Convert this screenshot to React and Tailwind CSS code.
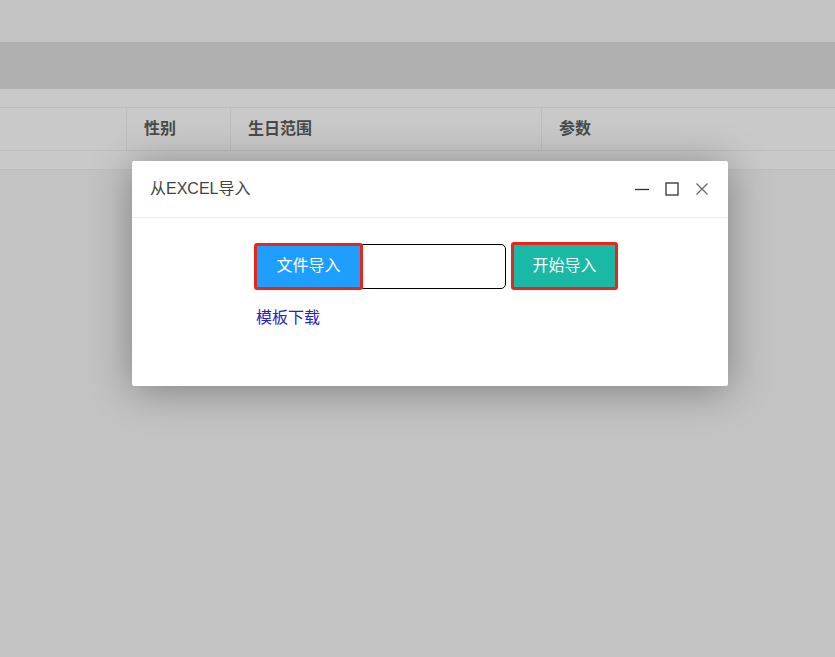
import React from 'react';

const font = { fontFamily: '"Liberation Sans", "Noto Sans CJK SC", sans-serif' };

const HeaderCell = ({ width, children, last }) => (
    <div className={`h-full flex items-center pl-[17px] ${last ? 'flex-1' : 'border-r border-[#bdbdbd]'} ${width}`}>
        <span className="text-[16px] font-bold text-[#4a4a4a]">{children}</span>
    </div>
);

const ImportDialog = () => (
    <div className="absolute left-[132px] top-[161px] w-[596px] h-[225px] bg-white rounded-[2px] shadow-[0_4px_40px_rgba(0,0,0,0.35)]">
        <div className="h-[57px] border-b border-[#eeeeee] flex items-center pl-[18px] pr-[19px]">
            <span className="text-[16px] text-[#444] flex-1">从EXCEL导入</span>
            <div className="flex items-center gap-[16px]">
                <svg width="14" height="14" viewBox="0 0 14 14"><path d="M0 7.5h14" stroke="#333" strokeWidth="1.3" /></svg>
                <svg width="14" height="14" viewBox="0 0 14 14"><rect x="1" y="1" width="12" height="12" fill="none" stroke="#333" strokeWidth="1.3" /></svg>
                <svg width="14" height="14" viewBox="0 0 14 14"><path d="M1.5 1.5l11 11M12.5 1.5l-11 11" stroke="#666" strokeWidth="1.2" /></svg>
            </div>
        </div>

        <div className="pl-[122px] pt-[24px]">
            <div className="flex items-center">
                <button className="w-[109px] h-[47px] border-[3px] border-[#e8261c] rounded-[3px] bg-[#1e9fff] text-white text-[16px] relative z-10">
                    文件导入
                </button>
                <div className="w-[144px] h-[45px] -ml-[1px] border border-black rounded-r-[5px] bg-white"></div>
                <button className="ml-[5px] w-[107px] h-[48px] border-[3px] border-[#e8261c] rounded-[3px] bg-[#19b9a5] text-white text-[16px]">
                    开始导入
                </button>
            </div>
            <a className="inline-block mt-[16px] ml-[2px] text-[16px] text-[#2424c8] cursor-pointer">模板下载</a>
        </div>
    </div>
);

export default function App() {
    return (
        <div className="relative w-[835px] h-[657px] overflow-hidden bg-[#c3c3c3]" style={font}>
            <div className="h-[42px] bg-[#c3c3c3]"></div>
            <div className="h-[47px] bg-[#b0b0b0]"></div>
            <div className="h-[19px] bg-[#c9c9c9] border-b border-[#bdbdbd]"></div>
            <div className="h-[43px] bg-[#c9c9c9] border-b border-[#bdbdbd] flex">
                <div className="w-[127px] border-r border-[#bdbdbd]"></div>
                <HeaderCell width="w-[104px]">性别</HeaderCell>
                <HeaderCell width="w-[311px]">生日范围</HeaderCell>
                <HeaderCell last>参数</HeaderCell>
            </div>
            <div className="h-[19px] bg-[#c9c9c9] border-b border-[#bdbdbd]"></div>
            <ImportDialog />
        </div>
    );
}
